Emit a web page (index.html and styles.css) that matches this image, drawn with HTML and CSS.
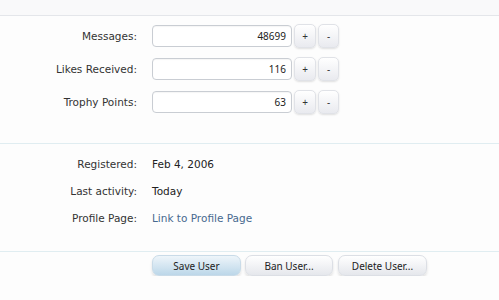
FILE: index.html
```html
<!DOCTYPE html>
<html>
<head>
<meta charset="utf-8">
<link rel="stylesheet" href="styles.css">
</head>
<body>
<div class="top"></div>
<div class="section counters">
  <div class="row">
    <label class="label">Messages:</label>
    <div class="controls">
      <input class="num" type="text" value="48699">
      <button class="spin plus">+</button>
      <button class="spin">-</button>
    </div>
  </div>
  <div class="row">
    <label class="label">Likes Received:</label>
    <div class="controls">
      <input class="num" type="text" value="116">
      <button class="spin plus">+</button>
      <button class="spin">-</button>
    </div>
  </div>
  <div class="row">
    <label class="label">Trophy Points:</label>
    <div class="controls">
      <input class="num" type="text" value="63">
      <button class="spin plus">+</button>
      <button class="spin">-</button>
    </div>
  </div>
</div>
<div class="section info">
  <div class="irow"><span class="label">Registered:</span><span class="value">Feb 4, 2006</span></div>
  <div class="irow"><span class="label">Last activity:</span><span class="value">Today</span></div>
  <div class="irow"><span class="label">Profile Page:</span><a class="link" href="#">Link to Profile Page</a></div>
</div>
<div class="actions">
  <button class="btn primary">Save User</button>
  <button class="btn ban">Ban User...</button>
  <button class="btn">Delete User...</button>
</div>
</body>
</html>
```
FILE: styles.css
```css
html, body {
  margin: 0;
  padding: 0;
  background: #fdfdfd;
  font-family: "DejaVu Sans", "Noto Sans", sans-serif;
  font-size: 10.5px;
  color: #333;
}
.top {
  height: 15px;
  background: #f9f9fa;
  border-bottom: 1px solid #e4e6ea;
}
.counters {
  padding: 8px 0 29px;
  display: flex;
  flex-direction: column;
  gap: 9px;
  border-bottom: 1px solid #e0edf1;
}
.row {
  height: 24px;
}
.row, .irow {
  display: grid;
  grid-template-columns: 137px auto;
  column-gap: 15px;
  align-items: center;
}
.label {
  text-align: right;
  color: #333;
}
.controls {
  display: flex;
  align-items: center;
  gap: 2px;
}
.num {
  box-sizing: border-box;
  width: 140px;
  height: 22px;
  border: 1px solid #c9cdd3;
  border-radius: 4px;
  background: #fff;
  text-align: right;
  padding: 0 5px 0 4px;
  font-family: "Noto Sans", sans-serif;
  font-size: 10px;
  color: #222;
  box-shadow: inset 0 1px 1px rgba(0,0,0,0.04);
}
.spin {
  box-sizing: border-box;
  width: 21px;
  height: 24px;
  padding: 0;
  border: 1px solid #e0e2e7;
  border-radius: 5px;
  background: linear-gradient(#ffffff, #e9eaef);
  box-shadow: 0 1px 2px rgba(0,0,0,0.12);
  font-family: "Noto Sans", sans-serif;
  font-size: 10px;
  color: #333;
}
.spin.plus {
  width: 22px;
}
.info {
  padding: 6px 0 20px;
  border-bottom: 1px solid #e0edf1;
}
.irow {
  height: 27px;
}
.value {
  color: #222;
}
.link {
  color: #47698f;
  text-decoration: none;
}
.actions {
  display: flex;
  gap: 4px;
  padding: 3px 0 0 152px;
}
.btn {
  box-sizing: border-box;
  width: 89px;
  height: 21px;
  padding: 0;
  border: 1px solid #dcdfe5;
  border-radius: 7px;
  background: linear-gradient(#ffffff, #e5e7ec);
  box-shadow: 0 2px 3px rgba(0,0,0,0.12);
  font-family: "Noto Sans", sans-serif;
  font-size: 10px;
  color: #222;
}
.btn.ban {
  width: 88px;
  margin-right: 1px;
}
.btn.primary {
  background: linear-gradient(#eef5fa, #bcd7e9);
  border-color: #c9dbe8;
}
```
